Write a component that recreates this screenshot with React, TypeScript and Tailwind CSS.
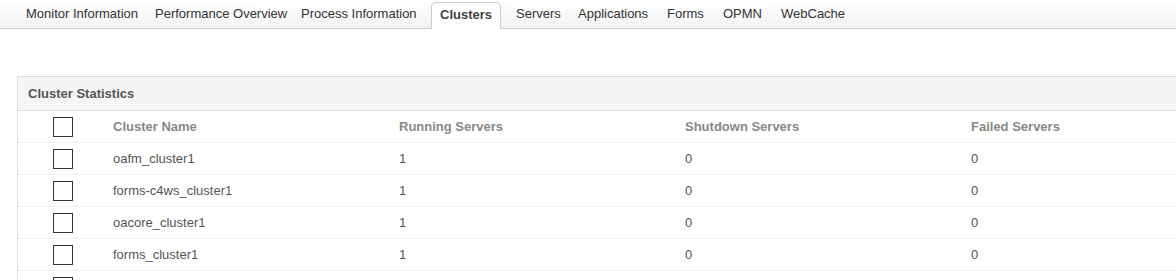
import React from "react";

// widths tuned so labels land where the original tab strip has them
const tabs = [
  { label: "Monitor Information", w: "w-[129px]" },
  { label: "Performance Overview", w: "w-[146px]" },
  { label: "Process Information", w: "w-[139px]" },
  { label: "Clusters", w: "w-[70px] mr-[6px]" },
  { label: "Servers", w: "w-[62px]" },
  { label: "Applications", w: "w-[89px]" },
  { label: "Forms", w: "w-[56px]" },
  { label: "OPMN", w: "w-[58px]" },
  { label: "WebCache", w: "w-[90px]" },
];

const rows = [
  { name: "oafm_cluster1", running: 1, shutdown: 0, failed: 0 },
  { name: "forms-c4ws_cluster1", running: 1, shutdown: 0, failed: 0 },
  { name: "oacore_cluster1", running: 1, shutdown: 0, failed: 0 },
  { name: "forms_cluster1", running: 1, shutdown: 0, failed: 0 },
  { name: "", running: "", shutdown: "", failed: "" },
];

const Checkbox = () => (
  <div className="w-[20px] h-[20px] border-[1.5px] border-[#333] bg-white" />
);

export default function App() {
  return (
    <div
      className="w-[1176px] h-[280px] overflow-hidden bg-white text-[13px]"
      style={{ fontFamily: '"Liberation Sans", Arial, sans-serif' }}
    >
      <div className="h-[29px] bg-gradient-to-b from-white to-[#f2f2f2] border-b border-[#cfcfcf] flex items-end pl-[17px]">
        {tabs.map((t) => {
          const active = t.label === "Clusters";
          return (
            <div
              key={t.label}
              className={
                active
                  ? `${t.w} h-[27px] -mb-px pl-[8px] pb-[2px] flex items-center bg-white border border-b-0 border-[#cccccc] rounded-t-[5px] font-bold text-[#444]`
                  : `${t.w} h-[27px] pl-[9px] pb-[2px] flex items-center text-[#333] whitespace-nowrap`
              }
            >
              {t.label}
            </div>
          );
        })}
      </div>

      <div className="mt-[47px] ml-[17px] border-t border-l border-[#dddddd]">
        <div className="h-[34px] bg-[#f5f5f5] border-b border-[#dddddd] flex items-center pl-[10px] font-bold text-[#555]">
          Cluster Statistics
        </div>
        <div className="grid grid-cols-[87px_286px_286px_286px_1fr] h-[32px] items-center border-b border-[#eeeeee] font-bold text-[#888]">
          <div className="flex justify-center pl-[2px]">
            <Checkbox />
          </div>
          <div className="pl-[8px]">Cluster Name</div>
          <div className="pl-[8px]">Running Servers</div>
          <div className="pl-[8px]">Shutdown Servers</div>
          <div className="pl-[8px]">Failed Servers</div>
        </div>
        {rows.map((r, i) => (
          <div
            key={i}
            className="grid grid-cols-[87px_286px_286px_286px_1fr] h-[32px] items-center border-b border-[#eeeeee] text-[#555]"
          >
            <div className="flex justify-center pl-[2px]">
              <Checkbox />
            </div>
            <div className="pl-[8px]">{r.name}</div>
            <div className="pl-[8px]">{r.running}</div>
            <div className="pl-[8px]">{r.shutdown}</div>
            <div className="pl-[8px]">{r.failed}</div>
          </div>
        ))}
      </div>
    </div>
  );
}
